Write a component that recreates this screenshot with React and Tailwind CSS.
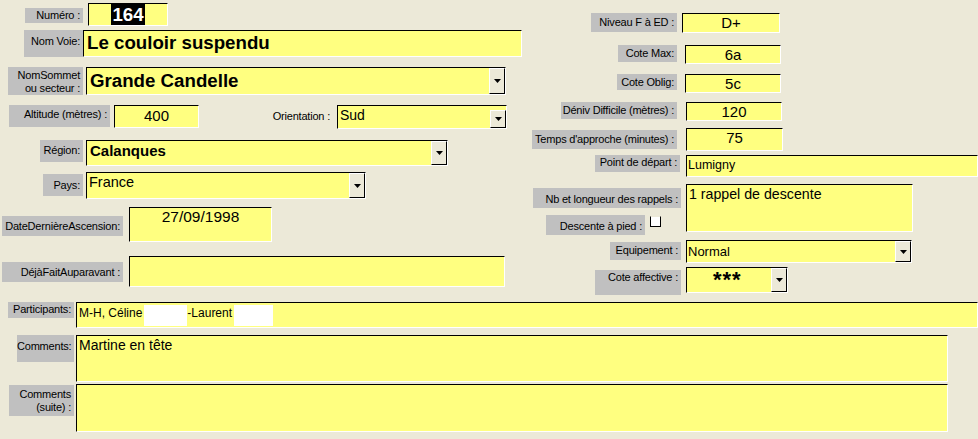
import React from 'react'

// Access-style form: "Voies" record
const Label = ({ className = '', children }) => (
  <div
    className={`shrink-0 bg-[#c0c0c0] pr-[3px] pt-[1px] text-right text-[11px] leading-[13px] tracking-[-0.2px] text-black ${className}`}
  >
    {children}
  </div>
)

const DropButton = ({ className = '' }) => (
  <div
    className={`flex w-[16px] shrink-0 items-center justify-center border border-t-white border-l-white border-r-black border-b-black bg-[#ece9d8] ${className}`}
  >
    <svg width="7" height="4" viewBox="0 0 7 4">
      <path d="M0 0h7L3.5 4z" fill="#000" />
    </svg>
  </div>
)

const Field = ({ className = '', textClass = '', drop = false, dropClass = 'self-stretch', children }) => (
  <div
    className={`flex shrink-0 border border-t-black border-l-black border-r-white border-b-white bg-[#ffff80] ${className}`}
  >
    <div className={`min-w-0 flex-1 overflow-hidden whitespace-nowrap text-black ${textClass}`}>{children}</div>
    {drop && <DropButton className={dropClass} />}
  </div>
)

export default function App() {
  return (
    <div className="h-[439px] w-[978px] overflow-hidden bg-[#ece9d8] font-['Liberation_Sans',Arial,sans-serif]">
      <div className="flex h-[295px]">
        {/* left column */}
        <div className="w-[528px] shrink-0 pt-[3px]">
          <div className="flex items-start">
            <Label className="ml-[25px] mt-[5px] h-[15px] w-[58px] pt-0">Numéro :</Label>
            <Field className="ml-[5px] h-[23px] w-[80px]" textClass="text-center text-[18.7px] font-bold leading-[21px]">
              <span className="bg-black px-[1px] text-white">164</span>
            </Field>
          </div>

          <div className="mt-[4px] flex items-start">
            <Label className="ml-[24px] h-[27px] w-[59px] pt-[5px]">Nom Voie:</Label>
            <Field className="h-[27px] w-[439px]" textClass="pl-[3px] text-[18.7px] font-bold leading-[24px]">
              Le couloir suspendu
            </Field>
          </div>

          <div className="mt-[10px] flex items-start">
            <Label className="ml-[8px] h-[28px] w-[75px] pt-[2px]">
              NomSommet
              <br />
              ou secteur :
            </Label>
            <Field className="ml-[3px] h-[28px] w-[420px]" textClass="pl-[3px] text-[18.7px] font-bold leading-[25px]" drop>
              Grande Candelle
            </Field>
          </div>

          <div className="mt-[10px] flex items-start">
            <Label className="ml-[9px] h-[22px] w-[101px] pt-[3px]">Altitude (mètres) :</Label>
            <Field className="ml-[4px] h-[23px] w-[85px]" textClass="text-center text-[15px] leading-[20px]">
              400
            </Field>
            <div className="ml-[70px] mt-[5px] w-[68px] shrink-0 pr-[7px] text-right text-[11px] leading-[13px] tracking-[-0.2px]">
              Orientation :
            </div>
            <Field className="h-[24px] w-[170px]" textClass="pl-[2px] text-[14px] leading-[19px]" drop dropClass="mt-[4px] h-[18px]">
              Sud
            </Field>
          </div>

          <div className="mt-[11px] flex items-start">
            <Label className="ml-[40px] h-[22px] w-[43px] pt-[4px]">Région:</Label>
            <Field className="ml-[3px] h-[26px] w-[362px]" textClass="pl-[3px] pt-[1px] text-[15px] font-bold leading-[18px]" drop>
              Calanques
            </Field>
          </div>

          <div className="mt-[6px] flex items-start">
            <Label className="ml-[43px] mt-[2px] h-[22px] w-[40px] pt-[5px]">Pays:</Label>
            <Field className="ml-[3px] h-[27px] w-[280px]" textClass="pl-[2px] text-[14.5px] leading-[18px]" drop>
              France
            </Field>
          </div>

          <div className="mt-[8px] flex items-start">
            <Label className="ml-[2px] mt-[9px] h-[20px] w-[121px] pt-[4px]">DateDernièreAscension:</Label>
            <Field className="ml-[6px] h-[35px] w-[143px]" textClass="text-center text-[15.5px] leading-[18px]">
              27/09/1998
            </Field>
          </div>

          <div className="mt-[14px] flex items-start">
            <Label className="ml-[2px] mt-[6px] h-[20px] w-[121px] pt-[4px]">DéjàFaitAuparavant :</Label>
            <Field className="ml-[6px] h-[31px] w-[376px]" />
          </div>
        </div>

        {/* right column */}
        <div className="flex-1 pt-[13px]">
          <div className="flex items-start">
            <Label className="ml-[63px] h-[19px] w-[86px] pt-[3px]">Niveau F à ED :</Label>
            <Field className="ml-[5px] h-[20px] w-[98px]" textClass="text-center text-[15px] leading-[18px]">
              D+
            </Field>
          </div>

          <div className="mt-[12px] flex items-start">
            <Label className="ml-[90px] h-[17px] w-[59px] pt-[2px]">Cote Max:</Label>
            <Field className="ml-[8px] h-[19px] w-[96px]" textClass="text-center text-[15px] leading-[17px]">
              6a
            </Field>
          </div>

          <div className="mt-[10px] flex items-start">
            <Label className="ml-[89px] h-[16px] w-[60px] pt-[2px]">Cote Oblig:</Label>
            <Field className="ml-[8px] h-[19px] w-[96px]" textClass="text-center text-[15px] leading-[17px]">
              5c
            </Field>
          </div>

          <div className="mt-[9px] flex items-start">
            <Label className="ml-[33px] h-[17px] w-[116px] pt-[2px]">Déniv Difficile (mètres) :</Label>
            <Field className="ml-[9px] h-[19px] w-[96px]" textClass="text-center text-[15px] leading-[17px]">
              120
            </Field>
          </div>

          <div className="mt-[7px] flex items-start">
            <Label className="ml-[4px] mt-[2px] h-[19px] w-[145px] pt-[3px]">Temps d'approche (minutes) :</Label>
            <Field className="ml-[9px] h-[23px] w-[97px]" textClass="text-center text-[15px] leading-[17px]">
              75
            </Field>
          </div>

          <div className="mt-[4px] flex items-start">
            <Label className="ml-[67px] h-[17px] w-[85px] pt-[1px]">Point de départ :</Label>
            <Field className="ml-[6px] h-[22px] flex-1" textClass="pl-[1px] pt-[1px] text-[12.5px] leading-[17px]">
              Lumigny
            </Field>
          </div>

          <div className="mt-[7px] flex items-start">
            <div className="ml-[5px] flex w-[148px] shrink-0 flex-col">
              <Label className="mt-[4px] h-[20px] w-[148px] pt-[5px]">Nb et longueur des rappels :</Label>
              <div className="mt-[7px] flex items-start">
                <Label className="ml-[13px] h-[20px] w-[99px] pt-[5px]">Descente à pied :</Label>
                <div className="ml-[5px] mt-[1px] h-[11px] w-[11px] border border-t-[#ece9d8] border-l-black border-r-black border-b-black bg-white" />
              </div>
            </div>
            <Field className="ml-[5px] h-[48px] w-[227px]" textClass="pl-[2px] text-[14.2px] leading-[18px]">
              1 rappel de descente
            </Field>
          </div>

          <div className="mt-[5px] flex items-start">
            <Label className="ml-[82px] mt-[2px] h-[18px] w-[71px] pt-[2px]">Equipement :</Label>
            <Field className="ml-[5px] h-[23px] w-[226px]" textClass="pl-[1px] pt-[2px] text-[13px] leading-[17px]" drop>
              Normal
            </Field>
          </div>

          <div className="mt-[4px] flex items-start">
            <Label className="ml-[67px] mt-[3px] h-[25px] w-[86px] pt-[1px]">Cote affective :</Label>
            <Field className="ml-[5px] h-[26px] w-[102px]" textClass="pl-[26px] pt-[1px] text-[22px] font-bold leading-[22px] tracking-[1px]" drop>
              ***
            </Field>
          </div>
        </div>
      </div>

      {/* bottom rows */}
      <div className="mt-[7px] flex items-start">
        <Label className="ml-[8px] h-[16px] w-[66px] pt-[1px]">Participants:</Label>
        <Field className="ml-[2px] h-[26px] flex-1" textClass="flex items-start pl-[2px] pt-[2px] text-[12px] leading-[17px]">
          <span>M-H, Céline</span>
          <span className="ml-[2px] h-[21px] w-[43px] shrink-0 bg-white" />
          <span>-Laurent</span>
          <span className="ml-[2px] h-[21px] w-[39px] shrink-0 bg-white" />
        </Field>
      </div>

      <div className="mt-[7px] flex items-start">
        <Label className="ml-[17px] h-[27px] w-[57px] pt-[5px]">Comments:</Label>
        <Field className="ml-[2px] h-[47px] w-[872px]" textClass="pl-[2px] pt-[1px] text-[14px] leading-[17px]">
          Martine en tête
        </Field>
      </div>

      <div className="mt-[2px] flex items-start">
        <Label className="ml-[9px] mt-[1px] h-[31px] w-[65px] pt-[3px]">
          Comments
          <br />
          (suite) :
        </Label>
        <Field className="ml-[2px] h-[48px] w-[872px]" />
      </div>
    </div>
  )
}
